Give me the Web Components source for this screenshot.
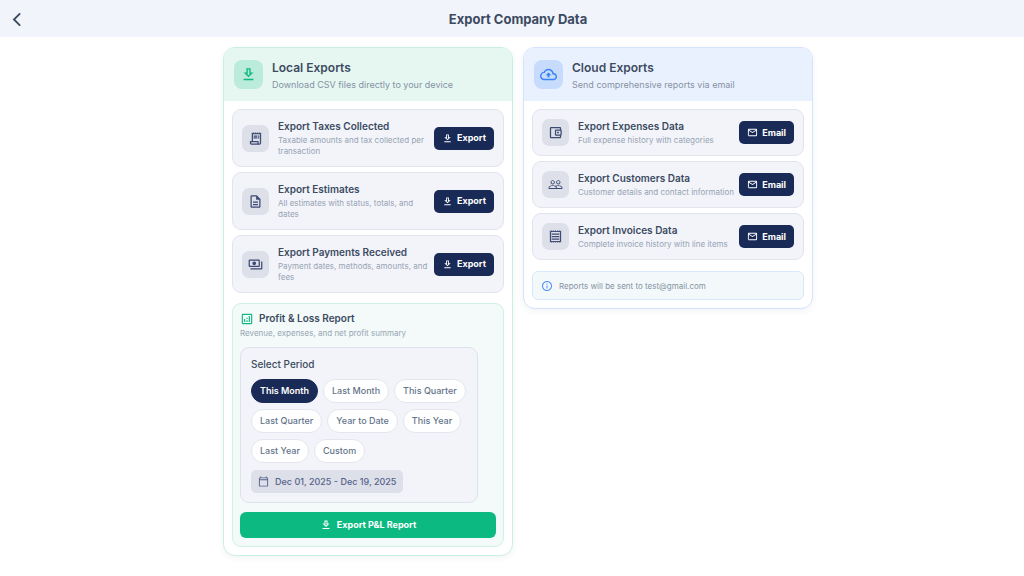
<!DOCTYPE html>
<html lang="en">
<head>
<meta charset="utf-8">
<meta name="viewport" content="width=device-width, initial-scale=1">
<title>Export Company Data</title>
<style>
  body { margin: 0; background: #fff; color: #3c4b61; font-family: Inter, "Liberation Sans", sans-serif; }
</style>
</head>
<body>
<export-page></export-page>
<script>
const ICONS = {
  back: '<path d="M17 3 8 12l9 9" fill="none" stroke="currentColor" stroke-width="3" stroke-linecap="round"/>',
  download: '<path d="M19 9h-4V3H9v6H5l7 7 7-7zm-8 2V5h2v6h1.17L12 13.17 9.83 11H11zM5 18h14v2H5z"/>',
  receipt: '<path d="M19.5 3.5 18 2l-1.5 1.5L15 2l-1.5 1.5L12 2l-1.5 1.5L9 2 7.5 3.5 6 2v14H3v3c0 1.66 1.34 3 3 3h12c1.66 0 3-1.34 3-3V2l-1.5 1.5zM15 20H6c-.55 0-1-.45-1-1v-1h10v2zm4-1c0 .55-.45 1-1 1s-1-.45-1-1v-3H8V5h11v14zM9 7h6v2H9zM16 7h2v2h-2zM9 10h6v2H9zM16 10h2v2h-2z"/>',
  document: '<path d="M8 16h8v2H8zm0-4h8v2H8zm6-10H6c-1.1 0-2 .9-2 2v16c0 1.1.89 2 1.99 2H18c1.1 0 2-.9 2-2V8l-6-6zm4 18H6V4h7v5h5v11z"/>',
  payments: '<path d="M19 14V6c0-1.1-.9-2-2-2H3c-1.1 0-2 .9-2 2v8c0 1.1.9 2 2 2h14c1.1 0 2-.9 2-2zm-2 0H3V6h14v8zm-7-7c-1.66 0-3 1.34-3 3s1.34 3 3 3 3-1.34 3-3-1.34-3-3-3zm13 0v11c0 1.1-.9 2-2 2H4v-2h17V7h2z"/>',
  wallet: '<path d="M21 7.28V5c0-1.1-.9-2-2-2H5c-1.11 0-2 .9-2 2v14c0 1.1.89 2 2 2h14c1.1 0 2-.9 2-2v-2.28c.59-.35 1-.98 1-1.72V9c0-.74-.41-1.37-1-1.72zM20 9v6h-7V9h7zM5 19V5h14v2h-6c-1.1 0-2 .9-2 2v6c0 1.1.9 2 2 2h6v2H5z"/><circle cx="16" cy="12" r="1.5"/>',
  people: '<path d="M16.5 13c-1.2 0-3.07.34-4.5 1-1.43-.67-3.3-1-4.5-1C5.33 13 1 14.08 1 16.25V19h22v-2.75c0-2.17-4.33-3.25-6.5-3.25zm-4 4.5h-10v-1.25c0-.54 2.56-1.75 5-1.75s5 1.21 5 1.75v1.25zm9 0H14v-1.25c0-.46-.2-.86-.52-1.22.88-.3 1.96-.53 3.02-.53 2.44 0 5 1.21 5 1.75v1.25zM7.5 12c1.93 0 3.5-1.57 3.5-3.5S9.43 5 7.5 5 4 6.57 4 8.5 5.57 12 7.5 12zm0-5.5c1.1 0 2 .9 2 2s-.9 2-2 2-2-.9-2-2 .9-2 2-2zm9 5.5c1.93 0 3.5-1.57 3.5-3.5S18.43 5 16.5 5 13 6.57 13 8.5s1.57 3.5 3.5 3.5zm0-5.5c1.1 0 2 .9 2 2s-.9 2-2 2-2-.9-2-2 .9-2 2-2z"/>',
  invoice: '<path d="M19.5 3.5 18 2l-1.5 1.5L15 2l-1.5 1.5L12 2l-1.5 1.5L9 2 7.5 3.5 6 2 4.5 3.5 3 2v20l1.5-1.5L6 22l1.5-1.5L9 22l1.5-1.5L12 22l1.5-1.5L15 22l1.5-1.5L18 22l1.5-1.5L21 22V2l-1.5 1.5zM19 19.09H5V4.91h14v14.18zM6 15h12v2H6zm0-4h12v2H6zm0-4h12v2H6z"/>',
  cloud: '<path d="M19.35 10.04C18.67 6.59 15.64 4 12 4 9.11 4 6.6 5.64 5.35 8.04 2.34 8.36 0 10.91 0 14c0 3.31 2.69 6 6 6h13c2.76 0 5-2.24 5-5 0-2.64-2.05-4.78-4.65-4.96zM19 18H6c-2.21 0-4-1.79-4-4 0-2.05 1.53-3.76 3.56-3.97l1.07-.11.5-.95C8.08 7.14 9.94 6 12 6c2.62 0 4.88 1.86 5.39 4.43l.3 1.5 1.53.11c1.56.1 2.78 1.41 2.78 2.96 0 1.65-1.35 3-3 3zM8 13h2.55v3h2.9v-3H16l-4-4z"/>',
  email: '<path d="M22 6c0-1.1-.9-2-2-2H4c-1.1 0-2 .9-2 2v12c0 1.1.9 2 2 2h16c1.1 0 2-.9 2-2V6zm-2 0-8 5-8-5h16zm0 12H4V8l8 5 8-5v10z"/>',
  info: '<path d="M11 7h2v2h-2zm0 4h2v6h-2zm1-9C6.48 2 2 6.48 2 12s4.48 10 10 10 10-4.48 10-10S17.52 2 12 2zm0 18c-4.41 0-8-3.59-8-8s3.59-8 8-8 8 3.59 8 8-3.59 8-8 8z"/>',
  calendar: '<path d="M20 3h-1V1h-2v2H7V1H5v2H4c-1.1 0-2 .9-2 2v16c0 1.1.9 2 2 2h16c1.1 0 2-.9 2-2V5c0-1.1-.9-2-2-2zm0 18H4V9h16v12zm0-14H4V5h16v2z"/>',
  analytics: '<path d="M19 3H5c-1.1 0-2 .9-2 2v14c0 1.1.9 2 2 2h14c1.1 0 2-.9 2-2V5c0-1.1-.9-2-2-2zm0 16H5V5h14v14zM7 12h2v5H7zM15 7h2v10h-2zM11 14h2v3h-2zM11 10h2v2h-2z"/>'
};

function define(name, render) {
  customElements.define(name, class extends HTMLElement {
    constructor() {
      super();
      this.attachShadow({ mode: "open" });
    }
    connectedCallback() {
      if (!this.shadowRoot.firstChild) this.shadowRoot.innerHTML = render(this);
    }
  });
}

define("app-icon", el => `
  <style>
    :host { display: block; flex: none; width: var(--icon-size, 14px); height: var(--icon-size, 14px); }
    svg { display: block; width: 100%; height: 100%; fill: currentColor; }
  </style>
  <svg viewBox="0 0 24 24" aria-hidden="true">${ICONS[el.getAttribute("name")]}</svg>`);

define("app-bar", () => `
  <style>
    :host { display: block; background: #f1f4fa; }
    header { display: grid; grid-template-columns: 36px 1fr 24px; align-items: center; height: 37px; padding-top: 1px; box-sizing: border-box; }
    button { border: 0; background: none; padding: 0; height: 34px; display: grid; place-items: center; padding-right: 4px; color: #3c4b61; --icon-size: 15px; }
    h1 { margin: 0; font-size: 13px; line-height: 18px; font-weight: 700; text-align: center; }
  </style>
  <header>
    <button type="button" aria-label="Back"><app-icon name="back"></app-icon></button>
    <h1><slot></slot></h1>
  </header>`);

define("export-card", el => `
  <style>
    :host { display: block; box-sizing: border-box; border: 1px solid var(--edge); border-radius: 12px; background: #fff;
      overflow: hidden; box-shadow: 0 2px 6px rgba(30, 50, 80, .06); }
    :host([tone="local"]) { --edge: #c8f0e1; --head: #e6f7f1; --tile: #baebdb; --accent: #10b981; }
    :host([tone="cloud"]) { --edge: #d3e3fd; --head: #eaf1fe; --tile: #c7dcfd; --accent: #3b82f6; }
    header { display: flex; align-items: center; gap: 9px; height: 53px; padding: 0 10px; background: var(--head); }
    .tile { display: grid; place-items: center; width: 29px; height: 29px; border-radius: 8px; background: var(--tile); color: var(--accent); --icon-size: 17px; }
    h2 { margin: 0; font-size: 12px; line-height: 17px; font-weight: 600; }
    p { margin: 0; padding-top: 2px; font-size: 9px; line-height: 13px; color: #8592a4; }
    .body { display: grid; gap: 5px; padding: 8px; }
  </style>
  <header>
    <div class="tile"><app-icon name="${el.getAttribute("icon")}"></app-icon></div>
    <div><h2>${el.getAttribute("heading")}</h2><p>${el.getAttribute("note")}</p></div>
  </header>
  <div class="body"><slot></slot></div>`);

define("export-item", el => `
  <style>
    :host { display: flex; align-items: center; box-sizing: border-box; min-height: 47px; padding: 9px; border: 1px solid #e1e4ec;
      border-radius: 9px; background: #f2f4fa; }
    .tile { display: grid; place-items: center; flex: none; width: 27px; height: 27px; margin-right: 9px; border-radius: 7px;
      background: #dddfe9; color: #3d4a73; --icon-size: 15px; }
    .text { flex: 1; min-width: 0; }
    h3 { margin: 0; padding-bottom: 2px; font-size: 10px; line-height: 14px; font-weight: 600; }
    p { margin: 0; font-size: 8px; line-height: 11px; color: #98a3b3; }
    button { display: flex; align-items: center; justify-content: center; gap: 4px; flex: none; height: 23px; padding: 0 8px;
      border: 0; border-radius: 5px; background: #1a2a56; color: #fff; font: 700 9px/12px Inter, "Liberation Sans", sans-serif; --icon-size: 11px; }
  </style>
  <div class="tile"><app-icon name="${el.getAttribute("icon")}"></app-icon></div>
  <div class="text"><h3>${el.getAttribute("heading")}</h3><p><slot></slot></p></div>
  <button type="button"><app-icon name="${el.getAttribute("action") === "Email" ? "email" : "download"}"></app-icon>${el.getAttribute("action")}</button>`);

define("info-note", () => `
  <style>
    :host { display: flex; align-items: center; gap: 6px; box-sizing: border-box; height: 29px; margin-top: 6px; padding: 0 8px;
      border: 1px solid #d8e7fc; border-radius: 6px; background: #f3f9fa; color: #8592a4; font-size: 8px; line-height: 12px; }
    app-icon { --icon-size: 12px; color: #4d8df7; }
  </style>
  <app-icon name="info"></app-icon><span><slot></slot></span>`);

define("period-chip", el => `
  <style>
    :host { display: block; }
    button { display: block; height: 24px; padding: 0 8px; border: 1px solid #e3e6ee; border-radius: 12px; background: #fff; color: #64748b;
      font: 500 9px/12px Inter, "Liberation Sans", sans-serif; }
    :host([selected]) button { border-color: #1a2a56; background: #1a2a56; color: #fff; font-weight: 600; }
  </style>
  <button type="button" aria-pressed="${el.hasAttribute("selected")}"><slot></slot></button>`);

define("profit-report", () => `
  <style>
    :host { display: block; box-sizing: border-box; margin-top: 5px; padding: 7px 7px 8px; border: 1px solid #cdf1e4; border-radius: 9px; background: #f3faf9; }
    .heading { display: flex; align-items: center; gap: 5px; }
    .heading app-icon { --icon-size: 14px; color: #10b981; }
    h3, h4 { margin: 0; font-size: 10px; line-height: 15px; font-weight: 600; }
    h4 { font-weight: 500; }
    p { margin: 0; padding-top: 1px; font-size: 8px; line-height: 13px; color: #98a6b4; }
    .period { box-sizing: border-box; width: fit-content; max-width: 238px; margin-top: 7px; padding: 9px 10px; border: 1px solid #dfe2ea; border-radius: 9px; background: #f2f4fa; }
    .chips { display: flex; flex-wrap: wrap; gap: 6px 5px; margin-top: 7px; }
    .range { display: flex; align-items: center; gap: 6px; width: fit-content; height: 23px; margin-top: 7px; padding: 0 7px; border: 0; border-radius: 5px;
      background: #dddfe9; color: #56638a; font: 500 9px/12px Inter, "Liberation Sans", sans-serif; --icon-size: 11px; }
    .submit { display: flex; align-items: center; justify-content: center; gap: 5px; width: 100%; height: 26px; margin-top: 9px; border: 0; border-radius: 6px;
      background: #0bb981; color: #fff; font: 700 9px/14px Inter, "Liberation Sans", sans-serif; --icon-size: 12px; }
  </style>
  <div class="heading"><app-icon name="analytics"></app-icon><h3>Profit &amp; Loss Report</h3></div>
  <p>Revenue, expenses, and net profit summary</p>
  <div class="period">
    <h4>Select Period</h4>
    <div class="chips"><slot></slot></div>
    <button type="button" class="range"><app-icon name="calendar"></app-icon>Dec 01, 2025 - Dec 19, 2025</button>
  </div>
  <button type="button" class="submit"><app-icon name="download"></app-icon>Export P&amp;L Report</button>`);

define("export-page", () => `
  <style>
    :host { display: block; }
    main { display: grid; grid-template-columns: repeat(auto-fit, minmax(270px, 1fr)); align-items: start; gap: 10px; max-width: 590px;
      margin: 0 auto; padding: 10px 0 21px; }
    .content { padding-left: 12px; }
  </style>
  <app-bar>Export Company Data</app-bar>
  <div class="content"><main>
    <export-card tone="local" icon="download" heading="Local Exports" note="Download CSV files directly to your device">
      <export-item icon="receipt" heading="Export Taxes Collected" action="Export">Taxable amounts and tax collected per transaction</export-item>
      <export-item icon="document" heading="Export Estimates" action="Export">All estimates with status, totals, and dates</export-item>
      <export-item icon="payments" heading="Export Payments Received" action="Export">Payment dates, methods, amounts, and fees</export-item>
      <profit-report>
        <period-chip selected>This Month</period-chip>
        <period-chip>Last Month</period-chip>
        <period-chip>This Quarter</period-chip>
        <period-chip>Last Quarter</period-chip>
        <period-chip>Year to Date</period-chip>
        <period-chip>This Year</period-chip>
        <period-chip>Last Year</period-chip>
        <period-chip>Custom</period-chip>
      </profit-report>
    </export-card>
    <export-card tone="cloud" icon="cloud" heading="Cloud Exports" note="Send comprehensive reports via email">
      <export-item icon="wallet" heading="Export Expenses Data" action="Email">Full expense history with categories</export-item>
      <export-item icon="people" heading="Export Customers Data" action="Email">Customer details and contact information</export-item>
      <export-item icon="invoice" heading="Export Invoices Data" action="Email">Complete invoice history with line items</export-item>
      <info-note>Reports will be sent to test@gmail.com</info-note>
    </export-card>
  </main></div>`);
</script>
</body>
</html>
